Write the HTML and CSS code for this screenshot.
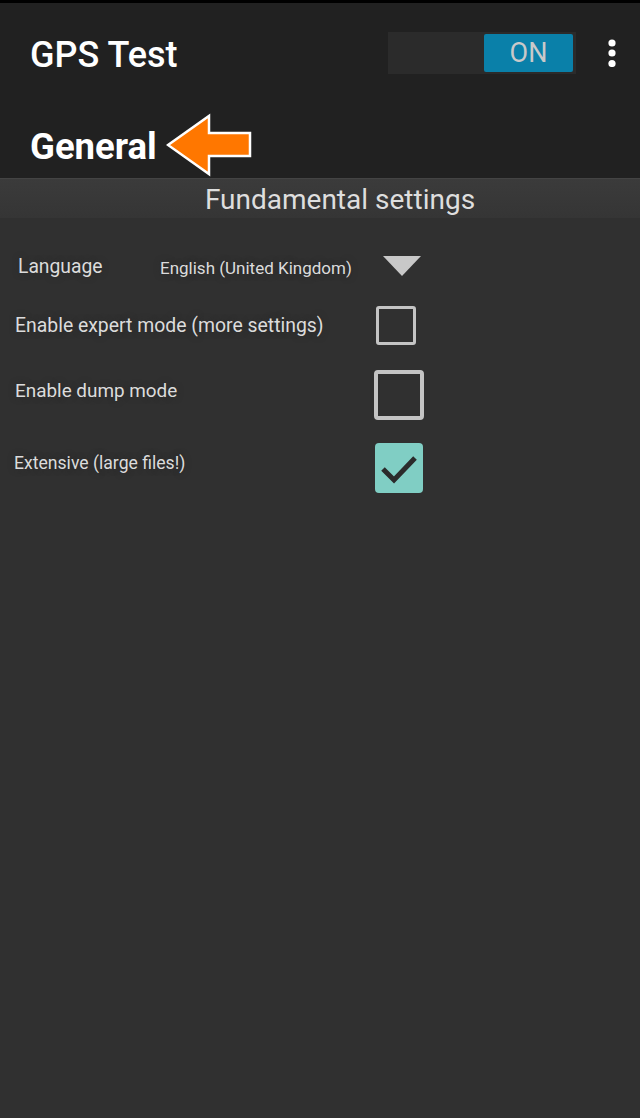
FILE: index.html
```html
<!DOCTYPE html>
<html lang="en">
<head>
    <meta charset="UTF-8">
    <meta name="viewport" content="width=device-width, initial-scale=1.0">
    <title>GPS Test - General</title>
    <link rel="stylesheet" href="styles.css">
</head>
<body>
    <div class="statusbar"></div>
    <div class="appbar">
        <div class="toolbar">
            <h1 class="app-title">GPS Test</h1>
            <div class="switch">
                <span class="switch-on">ON</span>
            </div>
            <svg class="overflow" width="8" height="28" viewBox="0 0 8 28">
                <circle cx="4" cy="4" r="3.6" fill="#fff"/>
                <circle cx="4" cy="14" r="3.6" fill="#fff"/>
                <circle cx="4" cy="24.5" r="3.6" fill="#fff"/>
            </svg>
        </div>
        <div class="page-heading">
            <h2>General</h2>
            <svg class="arrow" width="88" height="64" viewBox="0 0 88 64">
                <polygon points="2,32 43,3 43,20 84,20 84,43 43,43 43,61" fill="#ff7700" stroke="#fff" stroke-width="2.5" stroke-linejoin="miter"/>
            </svg>
        </div>
    </div>

    <div class="section-header">Fundamental settings</div>

    <div class="settings">
        <div class="row row-lang">
            <span class="label lang-label">Language</span>
            <span class="lang-value">English (United Kingdom)</span>
            <span class="dropdown"></span>
        </div>
        <div class="row row-expert">
            <span class="label">Enable expert mode (more settings)</span>
            <span class="control"><span class="checkbox small"></span></span>
        </div>
        <div class="row row-dump">
            <span class="label">Enable dump mode</span>
            <span class="control"><span class="checkbox"></span></span>
        </div>
        <div class="row row-extensive">
            <span class="label">Extensive (large files!)</span>
            <span class="control">
                <span class="checkbox checked">
                    <svg width="48" height="50" viewBox="0 0 48 50">
                        <polyline points="8,26 19,37 40,15" fill="none" stroke="#2b2b2b" stroke-width="5"/>
                    </svg>
                </span>
            </span>
        </div>
    </div>
</body>
</html>
```

FILE: styles.css
```css
html, body {
    height: 100%;
}

body {
    margin: 0;
    background: #303030;
    font-family: Roboto, "Noto Sans", sans-serif;
    color: #dcdcdc;
}

.statusbar {
    height: 3px;
    background: #000;
}

.appbar {
    background: #212121;
}

.toolbar {
    display: flex;
    align-items: center;
    height: 102px;
    padding: 0 24px 0 30px;
}

.app-title {
    flex: 1;
    margin: 0;
    padding-top: 2px;
    font-size: 36px;
    font-weight: 500;
    color: #fff;
}

.switch {
    display: flex;
    justify-content: flex-end;
    align-items: center;
    width: 188px;
    height: 42px;
    padding-right: 3px;
    box-sizing: border-box;
    background: #2b2b2b;
    margin-right: 32px;
    margin-bottom: 2px;
}

.switch-on {
    width: 89px;
    height: 38px;
    line-height: 38px;
    text-align: center;
    background: #0a80a9;
    border-radius: 2px;
    color: #c9c9c9;
    font-size: 27px;
}

.overflow {
    display: block;
    margin-bottom: 2px;
}

.page-heading {
    display: flex;
    align-items: center;
    height: 73px;
    padding: 0 0 0 30px;
    box-sizing: border-box;
    padding-top: 10px;
}

.page-heading h2 {
    margin: 0;
    font-size: 36.5px;
    font-weight: 700;
    color: #fff;
}

.arrow {
    display: block;
    margin-left: 9px;
    margin-top: -3px;
}

.section-header {
    height: 40px;
    line-height: 42px;
    padding-left: 40px;
    text-align: center;
    background: linear-gradient(#3b3b3b, #353535);
    border-top: 1px solid #444;
    box-sizing: border-box;
    font-size: 28px;
    color: #dedede;
}

.settings {
    padding-top: 24px;
}

.row {
    display: flex;
    align-items: center;
    padding-left: 15px;
    height: 70px;
}

.row-lang {
    height: 48px;
}

.row-extensive {
    height: 76px;
}

.label {
    width: 359px;
    font-size: 19.4px;
}

.row-dump .label {
    font-size: 18.9px;
    padding-bottom: 10px;
}

.row-extensive .label {
    width: 360px;
    margin-left: -1px;
    font-size: 17.6px;
    padding-bottom: 10px;
}

.label,
.lang-value {
    text-shadow: 0 0 6px #2a2a2a;
}

.lang-label {
    width: 142px;
    margin-left: 3px;
    font-size: 19.3px;
}

.lang-value {
    width: 223px;
    font-size: 17px;
    padding-top: 3px;
}

.dropdown {
    width: 0;
    height: 0;
    border-left: 19px solid transparent;
    border-right: 19px solid transparent;
    border-top: 20px solid #c8c8c8;
}

.control {
    display: flex;
    justify-content: center;
    width: 50px;
}

.checkbox {
    display: block;
    width: 50px;
    height: 50px;
    box-sizing: border-box;
    border: 4px solid #c4c4c4;
    border-radius: 4px;
}

.checkbox.small {
    width: 40px;
    height: 39px;
    border-width: 3px;
    border-radius: 3px;
    margin-left: -7px;
}

.checkbox.checked {
    width: 48px;
    border: none;
    background: #80cec4;
}

.checkbox.checked svg {
    display: block;
}
```
